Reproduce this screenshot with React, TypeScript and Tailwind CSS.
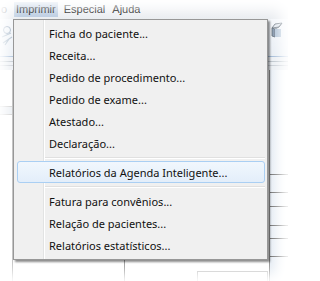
import React from "react";

const items1 = [
  "Ficha do paciente...",
  "Receita...",
  "Pedido de procedimento...",
  "Pedido de exame...",
  "Atestado...",
  "Declaração...",
];
const items3 = ["Fatura para convênios...", "Relação de pacientes...", "Relatórios estatísticos..."];

function Item({ label, active }: { label: string; active?: boolean }) {
  return (
    <div
      className={
        active
          ? "h-[22px] ml-[3px] mr-[2px] flex items-center pl-[31px] rounded-[3px] border border-[#aacff3] bg-gradient-to-b from-[#f1f7fd] to-[#e3eefa]"
          : "h-[22px] flex items-center pl-[35px]"
      }
    >
      <span className="text-[11px] leading-none text-[#111]">{label}</span>
    </div>
  );
}

function Sep() {
  return (
    <div className="h-[7px] flex items-center pl-[31px] pr-[2px]">
      <div className="w-full border-t border-[#e0e0e0] border-b border-b-white" />
    </div>
  );
}

export default function App() {
  return (
    <div
      className="relative w-[288px] h-[281px] overflow-hidden bg-white"
      style={{ fontFamily: '"Noto Sans", "Open Sans", sans-serif' }}
    >
      {/* background application */}
      <div className="flex flex-col w-full h-full">
        <div
          className="h-[19px] flex items-center bg-gradient-to-b from-[#f6f7f9] to-[#e9ecf0] text-[11px] text-black"
          style={{ fontFamily: '"Liberation Sans", Arial, sans-serif' }}
        >
          <span className="w-[14px] pl-[1px] text-[#666]">o</span>
          <span className="h-[15px] px-[2px] flex items-center bg-[#b9cbe0]">Imprimir</span>
          <span className="ml-[6px]">Especial</span>
          <span className="ml-[7px]">Ajuda</span>
        </div>
        <div className="h-[38px] flex bg-gradient-to-b from-[#f3f6fa] to-[#e6ecf3] border-b border-[#9db6d4]">
          <div className="w-[13px] flex items-start pt-[6px] pl-[1px]">
            <svg width="12" height="22" viewBox="0 0 12 22">
              <circle cx="6" cy="5" r="3.5" fill="none" stroke="#8fa3b8" />
              <path d="M1 12 L10 8 M2 18 L11 12 M4 20 L8 14" stroke="#9fb2c4" strokeWidth="1.2" fill="none" />
            </svg>
          </div>
          <div className="flex-1" />
          <div className="w-[20px] pt-[1px] pl-[2px]">
            <svg width="16" height="20" viewBox="0 0 16 20">
              <path d="M2 8 L5 4 L12 3 L9 7 Z" fill="#dfe6ee" stroke="#5b6470" strokeWidth="0.8" />
              <path d="M2 8 L2 16 L5 17 L5 9 Z" fill="#7b8ea6" stroke="#4e5a68" strokeWidth="0.8" />
              <path d="M5 9 L9 7 L12 3" fill="none" stroke="#4e5a68" strokeWidth="0.8" />
              <rect x="5" y="9" width="6" height="8" fill="#a9bdd3" />
            </svg>
          </div>
        </div>
        <div className="h-[13px] flex flex-col justify-center gap-[3px] bg-[#e9edf2]">
          <div className="border-t border-[#b8c0c8]" />
          <div className="border-t border-[#c4cad2]" />
        </div>
        <div className="flex-1 flex">
          <div className="w-[13px] border-r border-[#b0b0b0] flex flex-col">
            <div className="h-[18px]" />
            <div className="h-[19px] border-b border-[#c8c8c8]" />
            <div className="h-[8px] border-b border-[#c8c8c8] bg-[#e8ecf1]" />
            <div className="flex-1" />
          </div>
          <div className="w-[112px] border-r border-[#9a9a9a]" />
          <div className="flex-1 flex flex-col justify-end">
            <div className="h-[10px] ml-[72px] w-[71px] border-t border-l border-r border-[#c0c0c0]" />
          </div>
          <div className="w-[19px] border-l border-[#8a8a8a] flex flex-col bg-gradient-to-r from-[#e4ebf3] to-white">
            <div className="h-[104px]" />
            <div className="h-[18px] border-t border-[#707070]" />
            <div className="h-[14px] border-t border-[#707070]" />
            <div className="h-[19px] border-t border-[#707070]" />
            <div className="h-[13px] border-t border-[#707070]" />
            <div className="h-[18px] border-t border-[#707070]" />
            <div className="border-t border-[#707070]" />
          </div>
        </div>
      </div>

      {/* edge fade */}
      <div className="absolute inset-0 pointer-events-none shadow-[inset_0_0_14px_8px_white]" />

      {/* dropdown menu */}
      <div className="absolute left-[13px] top-[19px] w-[255px] h-[241px] border border-[#979797] bg-[#f0f0f0] shadow-[2px_2px_2px_rgba(0,0,0,0.45)] py-[2px]">
        <div className="absolute left-[29px] top-0 bottom-0 w-[2px] border-l border-[#e2e3e3] border-r border-r-white" />
        <div className="relative flex flex-col">
          {items1.map((t) => (
            <Item key={t} label={t} />
          ))}
          <Sep />
          <Item label="Relatórios da Agenda Inteligente..." active />
          <Sep />
          {items3.map((t) => (
            <Item key={t} label={t} />
          ))}
        </div>
      </div>
    </div>
  );
}
